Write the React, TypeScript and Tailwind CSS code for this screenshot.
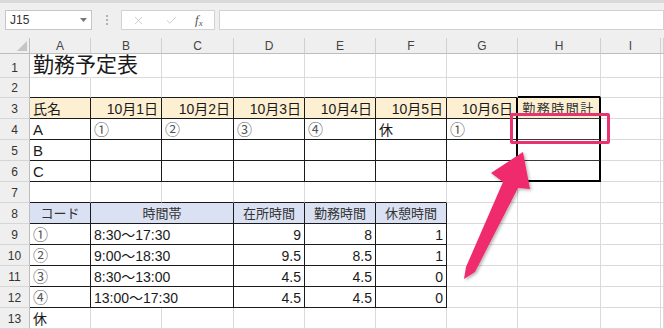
import { Check, X } from "lucide-react";

const LETTERS = ["A", "B", "C", "D", "E", "F", "G", "H", "I", ""];

type Cell = { t: string; a?: "l" | "c" | "r"; k?: "title" | "big" | "small" | "hdr" | "circ" };

const DATA: Record<string, Cell> = {
  "1,1": { t: "勤務予定表", a: "l", k: "title" },
  "3,1": { t: "氏名", a: "l" },
  "3,2": { t: "10月1日", a: "r" },
  "3,3": { t: "10月2日", a: "r" },
  "3,4": { t: "10月3日", a: "r" },
  "3,5": { t: "10月4日", a: "r" },
  "3,6": { t: "10月5日", a: "r" },
  "3,7": { t: "10月6日", a: "r" },
  "3,8": { t: "勤務時間計", a: "c", k: "small" },
  "4,1": { t: "A", a: "l", k: "big" },
  "4,2": { t: "①", a: "l", k: "circ" },
  "4,3": { t: "②", a: "l", k: "circ" },
  "4,4": { t: "③", a: "l", k: "circ" },
  "4,5": { t: "④", a: "l", k: "circ" },
  "4,6": { t: "休", a: "l" },
  "4,7": { t: "①", a: "l", k: "circ" },
  "5,1": { t: "B", a: "l", k: "big" },
  "6,1": { t: "C", a: "l", k: "big" },
  "8,1": { t: "コード", a: "c", k: "hdr" },
  "8,2": { t: "時間帯", a: "c", k: "hdr" },
  "8,4": { t: "在所時間", a: "c", k: "hdr" },
  "8,5": { t: "勤務時間", a: "c", k: "hdr" },
  "8,6": { t: "休憩時間", a: "c", k: "hdr" },
  "9,1": { t: "①", a: "l", k: "circ" },
  "9,2": { t: "8:30〜17:30", a: "l" },
  "9,4": { t: "9", a: "r" },
  "9,5": { t: "8", a: "r" },
  "9,6": { t: "1", a: "r" },
  "10,1": { t: "②", a: "l", k: "circ" },
  "10,2": { t: "9:00〜18:30", a: "l" },
  "10,4": { t: "9.5", a: "r" },
  "10,5": { t: "8.5", a: "r" },
  "10,6": { t: "1", a: "r" },
  "11,1": { t: "③", a: "l", k: "circ" },
  "11,2": { t: "8:30〜13:00", a: "l" },
  "11,4": { t: "4.5", a: "r" },
  "11,5": { t: "4.5", a: "r" },
  "11,6": { t: "0", a: "r" },
  "12,1": { t: "④", a: "l", k: "circ" },
  "12,2": { t: "13:00〜17:30", a: "l" },
  "12,4": { t: "4.5", a: "r" },
  "12,5": { t: "4.5", a: "r" },
  "12,6": { t: "0", a: "r" },
  "13,1": { t: "休", a: "l" },
};

const inT1 = (r: number, c: number) => r >= 3 && r <= 6 && c >= 1 && c <= 7;
const inT2 = (r: number, c: number) => r >= 8 && r <= 12 && c >= 1 && c <= 6;
const inH = (r: number, c: number) => r >= 3 && r <= 6 && c === 8;
const inT = (r: number, c: number) => inT1(r, c) || inT2(r, c) || inH(r, c);

const borders = (r: number, c: number, end: number) => {
  let right = "border-r border-r-[#dadada]";
  if (r === 1 && c === 1) right = "border-r border-r-transparent";
  else if (inH(r, end) || inH(r, end + 1)) right = "border-r-2 border-r-black";
  else if (inT(r, end) || inT(r, end + 1)) right = "border-r border-r-[#1a1a1a]";

  let bottom = "border-b border-b-[#dadada]";
  if (c === 8 && (r === 2 || r === 6)) bottom = "border-b-2 border-b-black";
  else if (c === 8 && r >= 3 && r <= 5) bottom = "border-b border-b-[#3a3a3a]";
  else if (inT(r, c) || inT(r + 1, c)) bottom = "border-b border-b-[#1a1a1a]";
  return right + " " + bottom;
};

const alignCls = {
  l: "justify-start pl-[3px]",
  c: "justify-center",
  r: "justify-end pr-[3px]",
};

const kindCls = {
  title: "text-[21px] leading-[24px] text-[#1a1a1a]",
  big: "text-[15px] leading-[18px] text-[#1a1a1a]",
  small: "text-[13px] tracking-[1.5px] leading-[16px] self-start pt-[3px] text-[#333]",
  hdr: "text-[13px] leading-[16px] text-[#333] pb-[1px]",
  circ: "text-[15px] leading-[18px] text-[#555]",
  normal: "text-[14px] leading-[17px] text-[#1a1a1a]",
};

export default function App() {
  const grid: React.ReactNode[] = [];

  grid.push(
    <div key="corner" className="relative bg-[#efefef] border-r border-b border-[#bdbdbd]">
      <svg className="absolute right-[2px] bottom-[2px]" width="10" height="10">
        <polygon points="10,0 10,10 0,10" fill="#c4c4c4" />
      </svg>
    </div>
  );
  LETTERS.forEach((l, i) =>
    grid.push(
      <div
        key={"h" + i}
        className="flex items-center justify-center bg-[#efefef] border-r border-r-[#d0d0d0] border-b border-b-[#bdbdbd] text-[12px] text-[#444]"
      >
        {l}
      </div>
    )
  );

  for (let r = 1; r <= 13; r++) {
    grid.push(
      <div
        key={"r" + r}
        className="flex items-end justify-center pb-[2px] bg-[#efefef] border-r border-r-[#bdbdbd] border-b border-b-[#d6d6d6] text-[12px] leading-[14px] text-[#333]"
      >
        {r}
      </div>
    );
    for (let c = 1; c <= 10; c++) {
      const merged = r >= 8 && r <= 12 && c === 2;
      if (r >= 8 && r <= 12 && c === 3) continue;
      const end = merged ? 3 : c;
      const cell = DATA[r + "," + c];
      const fill =
        r === 3 && c <= 8 ? "bg-[#fcefd2]" : r === 8 && c <= 6 ? "bg-[#d9e1f2]" : "";
      grid.push(
        <div
          key={r + "-" + c}
          className={`flex items-end whitespace-nowrap overflow-visible ${merged ? "col-span-2" : ""} ${fill} ${borders(r, c, end)} ${cell ? alignCls[cell.a ?? "l"] : ""}`}
        >
          {cell && <span className={kindCls[cell.k ?? "normal"]}>{cell.t}</span>}
        </div>
      );
    }
  }

  return (
    <div className="relative w-[664px] h-[329px] overflow-hidden bg-white font-['Liberation_Sans','Noto_Sans_CJK_JP',sans-serif]">
      {/* formula bar */}
      <div className="h-[38px] bg-[#efefef] border-t-[3px] border-[#d9d9d9] flex items-start pt-[7px]">
        <div className="ml-[5px] w-[87px] h-[20px] bg-white border border-[#c6c6c6] flex items-center justify-between px-[4px]">
          <span className="text-[12px] text-[#333]">J15</span>
          <svg width="7" height="4">
            <polygon points="0,0 7,0 3.5,4" fill="#777" />
          </svg>
        </div>
        <div className="w-[29px] h-[20px] flex flex-col items-center justify-center gap-[2px]">
          <span className="w-[2px] h-[2px] bg-[#b0b0b0]" />
          <span className="w-[2px] h-[2px] bg-[#b0b0b0]" />
          <span className="w-[2px] h-[2px] bg-[#b0b0b0]" />
        </div>
        <div className="w-[94px] h-[20px] bg-white border border-[#d2d2d2] flex items-center">
          <X size={13} strokeWidth={1.4} className="ml-[10px] text-[#bdbdbd]" />
          <Check size={13} strokeWidth={1.4} className="ml-[20px] text-[#bdbdbd]" />
          <span className="ml-[17px] font-['Liberation_Serif',serif] italic text-[13px] text-[#555]">
            f<span className="text-[9px] relative top-[2px]">x</span>
          </span>
        </div>
        <div className="ml-[4px] flex-1 h-[20px] bg-white border border-[#d2d2d2]" />
      </div>

      {/* sheet */}
      <div className="grid grid-cols-[30px_61px_71px_72px_71px_71px_71px_71px_83px_60px_1fr] grid-rows-[16px_24px_20px_repeat(11,21px)]">
        {grid}
      </div>

      {/* callout */}
      <div className="absolute left-[510px] top-[113px] w-[100px] h-[31px] border-[3px] border-[#e8336f] rounded-[2px]" />
      <svg className="absolute inset-0 pointer-events-none" width="664" height="329">
        <defs>
          <filter id="sh" x="-20%" y="-20%" width="140%" height="140%">
            <feDropShadow dx="1.5" dy="1.5" stdDeviation="1.5" floodOpacity="0.3" />
          </filter>
        </defs>
        <polygon
          points="523,152 530,189 518,188 475,272 464,279 466,267 503,182 491,173"
          fill="#ef2a6d"
          filter="url(#sh)"
        />
      </svg>
    </div>
  );
}
